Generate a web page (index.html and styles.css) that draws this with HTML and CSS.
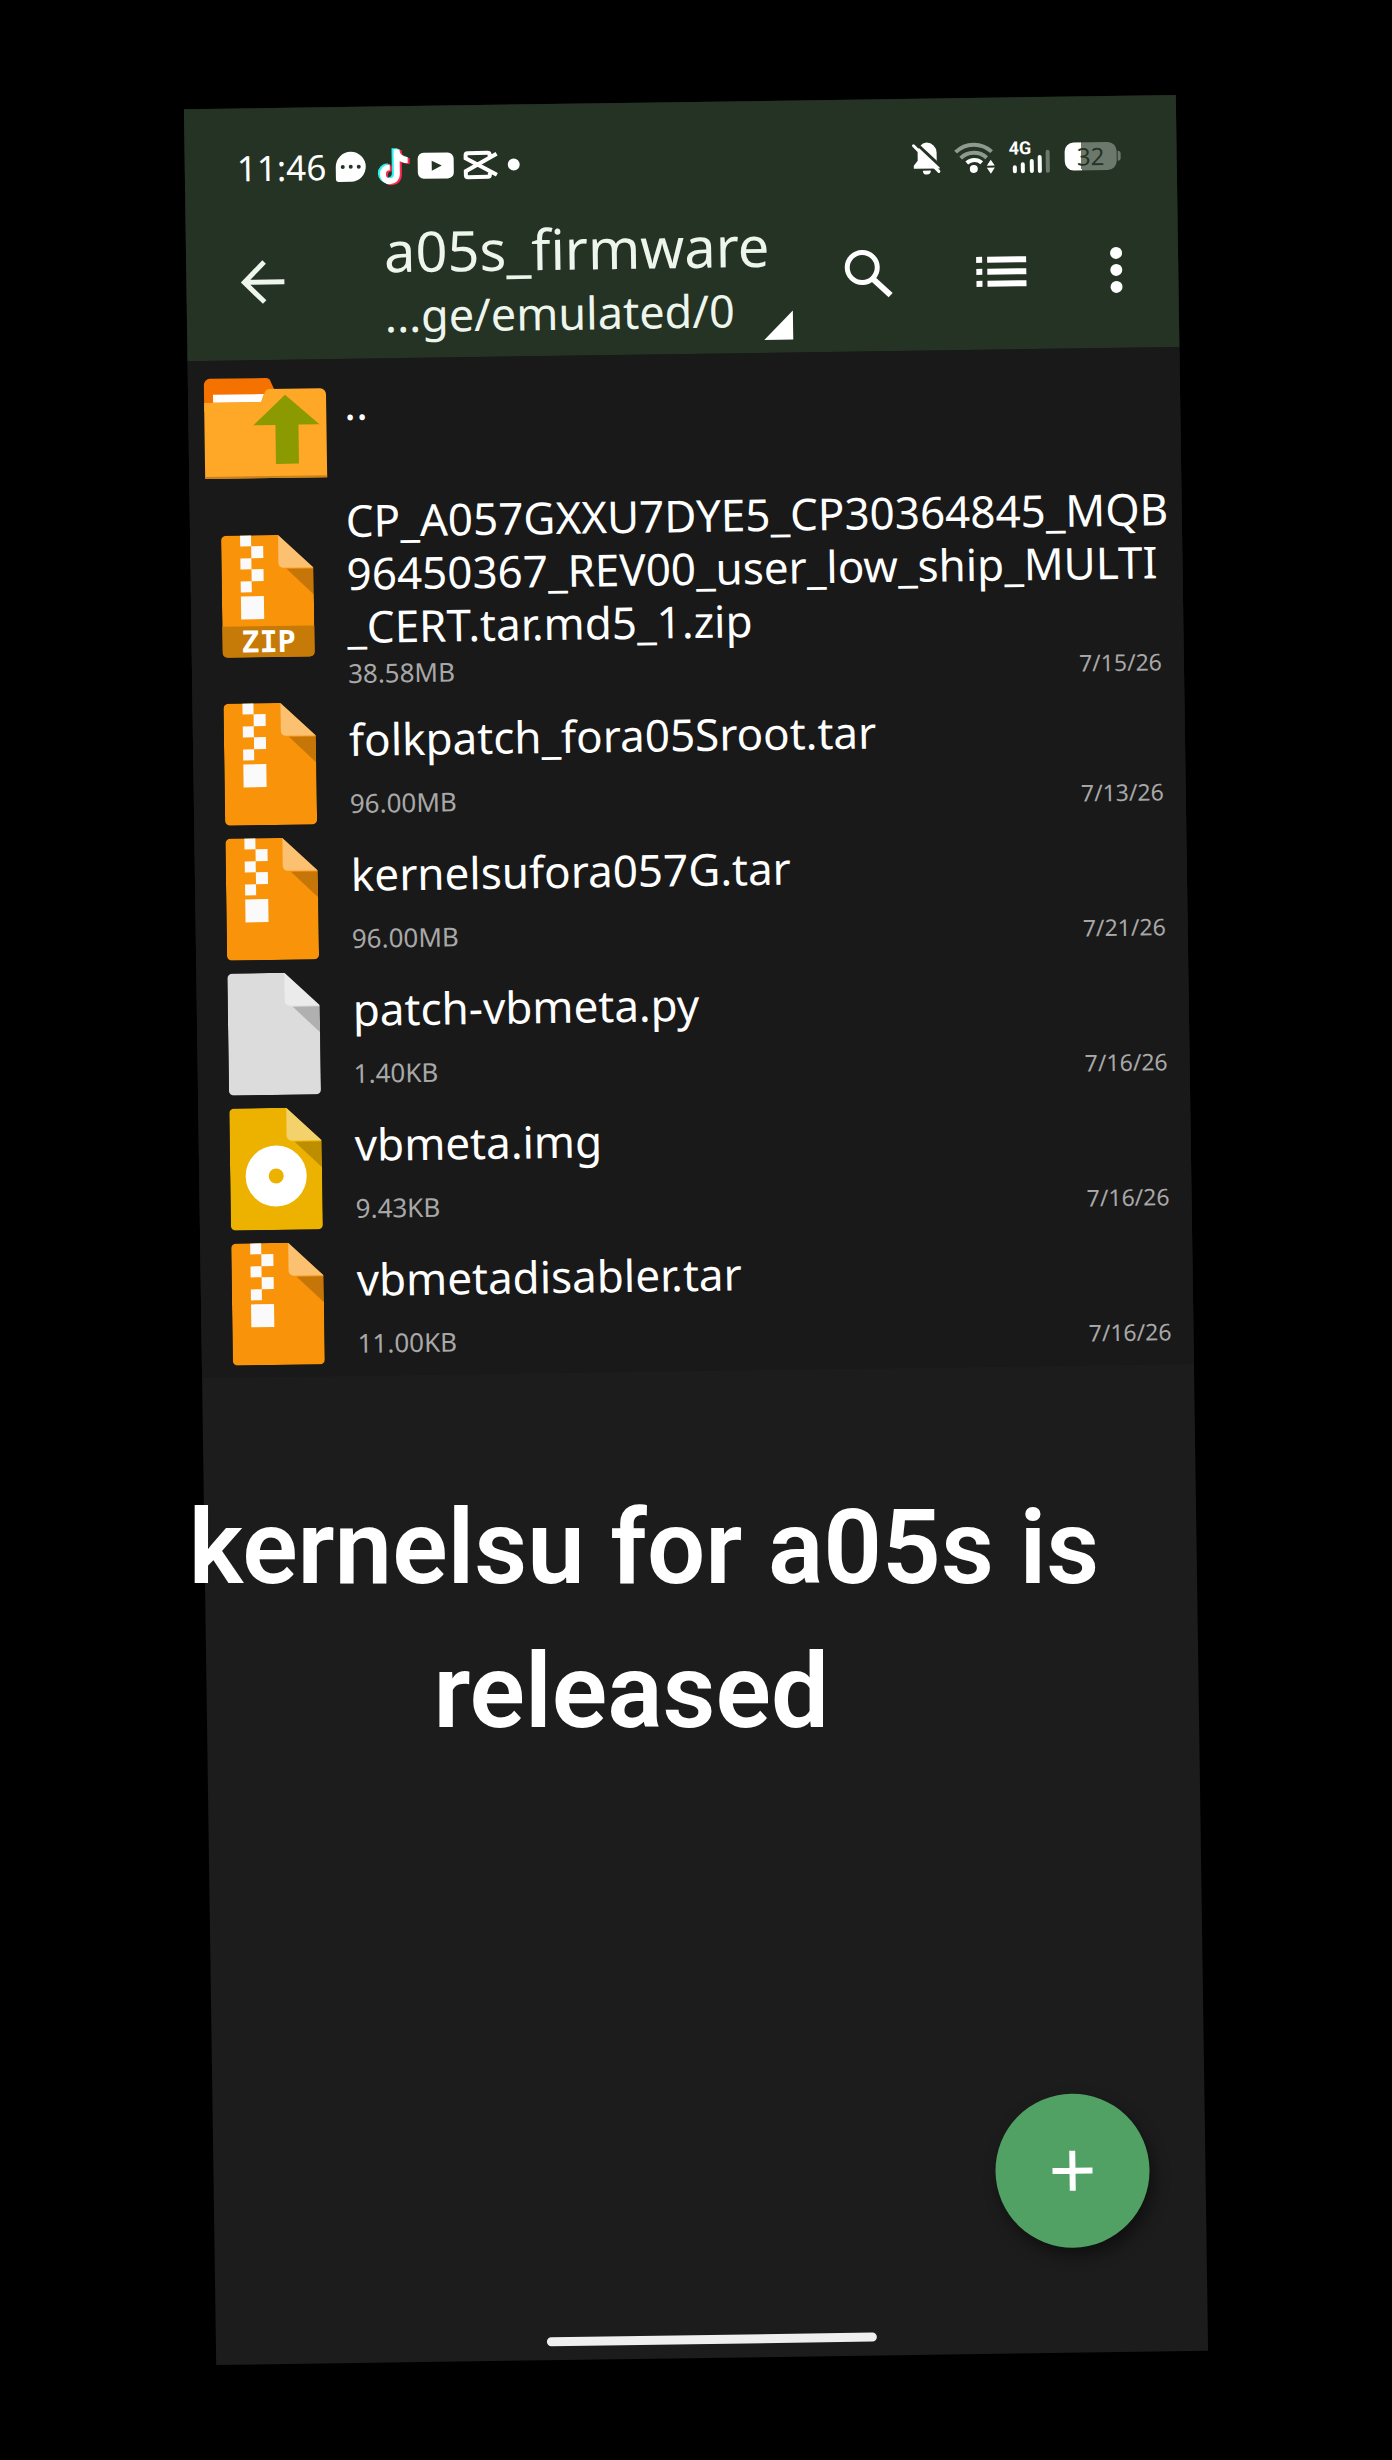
FILE: index.html
```html
<!DOCTYPE html>
<html lang="en">
<head>
  <meta charset="UTF-8" />
  <meta name="viewport" content="width=device-width, initial-scale=1.0"/>
  <title>a05s_firmware</title>
  <link rel="stylesheet" href="styles.css">
</head>
<body>
  <!-- shared icon shapes -->
  <svg class="sprite" aria-hidden="true">
    <symbol id="fold" viewBox="0 0 92 122">
      <path d="M5 0H57L92 33V117a5 5 0 0 1-5 5H5a5 5 0 0 1-5-5V5a5 5 0 0 1 5-5z" fill="currentColor"/>
      <path d="M57 0L92 33H62a5 5 0 0 1-5-5z" fill="#fff" fill-opacity=".42"/>
      <path d="M65 34H92V60z" fill="#000" fill-opacity=".2"/>
    </symbol>
    <symbol id="archive" viewBox="0 0 92 122">
      <use href="#fold"/>
      <path d="M19 0h11v11h12v12H30v11h12v12H30v11H19V46h11V34H19V23h11V11H19zM19 61h23v23H19z" fill="#fafafa"/>
    </symbol>
  </svg>

  <main class="stage">
    <div class="phone">
      <header class="top">
        <div class="status-bar">
          <div class="status-left">
            <span class="clock">11:46</span>
            <svg width="30" height="30" viewBox="0 0 30 30">
              <path d="M15 0a15 15 0 0 1 0 30H3a3 3 0 0 1-3-3V15A15 15 0 0 1 15 0z" fill="#fff"/>
              <g fill="#243323"><circle cx="7" cy="15" r="2"/><circle cx="15" cy="15" r="2"/><circle cx="23" cy="15" r="2"/></g>
            </svg>
            <svg width="32" height="36" viewBox="-3 0 32 36">
              <g fill="none" stroke-width="6">
                <path d="M16 0V25a7 7 0 1 1-7-7M16 1c0 6 5 10 11 10" stroke="#25f4ee"/>
                <path d="M20 2V27a7 7 0 1 1-7-7M20 3c0 6 5 10 11 10" stroke="#fe2c55"/>
                <path d="M18 1V26a7 7 0 1 1-7-7M18 2c0 6 5 10 11 10" stroke="#fff"/>
              </g>
            </svg>
            <svg width="36" height="26" viewBox="0 0 36 26">
              <rect width="36" height="26" rx="6" fill="#fff"/>
              <path d="M14 8l10 5-10 5z" fill="#243323"/>
            </svg>
            <svg width="34" height="28" viewBox="0 0 34 28">
              <path d="M26 6V4a2 2 0 0 0-2-2H4a2 2 0 0 0-2 2v3l31 17M33 3L2 20v4a2 2 0 0 0 2 2h20a2 2 0 0 0 2-2v-2" fill="none" stroke="#fff" stroke-width="4"/>
            </svg>
            <svg width="12" height="12" viewBox="0 0 12 12"><circle cx="6" cy="6" r="6" fill="#fff"/></svg>
          </div>
          <div class="status-right">
            <svg width="28" height="34" viewBox="0 0 28 34">
              <path d="M14 1a10 10 0 0 1 10 10v8l3 5v3H1v-3l4-5v-8A10 10 0 0 1 14 1zM10 29h8a4 4 0 0 1-8 0z" fill="#fff"/>
              <path d="M3 1L30 27" stroke="#243323" stroke-width="3"/>
              <path d="M1 4L26 30" stroke="#fff" stroke-width="3" stroke-linecap="round"/>
            </svg>
            <svg width="40" height="32" viewBox="0 0 40 32">
              <g fill="none" stroke-width="4">
                <path d="M1 10a26 26 0 0 1 36 0" stroke="#8f9a8f"/>
                <path d="M6 16a19 19 0 0 1 26 0" stroke="#8f9a8f"/>
                <path d="M12 21a11 11 0 0 1 15 0" stroke="#fff"/>
              </g>
              <circle cx="19" cy="27" r="4" fill="#fff"/>
              <path d="M32 24l4-6 4 6zM32 26h8l-4 6z" fill="#fff"/>
            </svg>
            <span class="signal">
              <span class="network">4G</span>
              <svg width="38" height="24" viewBox="0 0 38 24">
                <g stroke="#fff" stroke-width="4" stroke-linecap="round">
                  <path d="M2 18v4M10 15v7M19 12v10M27 8v14"/>
                  <path d="M35 3v19" stroke="#6d786d"/>
                </g>
              </svg>
            </span>
            <span class="battery"><span class="level">32</span></span>
          </div>
        </div>

        <nav class="app-bar">
          <button class="icon-btn back" aria-label="Back">
            <svg width="44" height="44" viewBox="0 0 44 44"><path d="M44 22H4M24 2L4 22l20 20" fill="none" stroke="#eef5ec" stroke-width="5"/></svg>
          </button>
          <button class="path">
            <span class="folder-name">a05s_firmware</span>
            <span class="folder-path">...ge/emulated/0</span>
          </button>
          <div class="actions">
            <button class="icon-btn" aria-label="Search">
              <svg width="48" height="48" viewBox="0 0 48 48"><circle cx="18" cy="18" r="15" fill="none" stroke="#fff" stroke-width="5"/><path d="M29 30L46 46" stroke="#fff" stroke-width="6"/></svg>
            </button>
            <button class="icon-btn" aria-label="View">
              <svg width="50" height="30" viewBox="0 0 50 30"><path d="M0 3h6M11 3h39M0 15h6M11 15h39M0 27h6M11 27h39" stroke="#fff" stroke-width="6"/></svg>
            </button>
            <button class="icon-btn" aria-label="More">
              <svg width="12" height="46" viewBox="0 0 12 46"><g fill="#fff"><circle cx="6" cy="6" r="6"/><circle cx="6" cy="23" r="6"/><circle cx="6" cy="40" r="6"/></g></svg>
            </button>
          </div>
        </nav>
      </header>

      <ul class="files">
        <li>
          <a class="row" href="#">
            <svg class="icon" width="122" height="100" viewBox="0 0 122 100">
              <path d="M6 0H62q4 0 5 4l4 9v20H0V6a6 6 0 0 1 6-6z" fill="#f57200"/>
              <path d="M9 16H60l-3 8H9z" fill="#fff"/>
              <path d="M0 24H57l4-10q1-3 5-3H116a6 6 0 0 1 6 6V100H0z" fill="#ffa726"/>
              <path d="M0 98H122v2H0z" fill="#c8821c"/>
              <path d="M81 17L115 47H94V86H71V47H49z" fill="#8a9a00"/>
            </svg>
            <span class="info"><span class="name">..</span></span>
          </a>
        </li>
        <li>
          <a class="row" href="#">
            <svg class="icon archive" width="92" height="122" viewBox="0 0 92 122">
              <use href="#archive"/>
              <path d="M0 91H92V117a5 5 0 0 1-5 5H5a5 5 0 0 1-5-5z" fill="#c67b08"/>
              <text class="ext" x="46" y="117">ZIP</text>
            </svg>
            <span class="info">
              <span class="name">CP_A057GXXU7DYE5_CP30364845_MQB<br>96450367_REV00_user_low_ship_MULTI<br>_CERT.tar.md5_1.zip</span>
              <span class="meta"><span>38.58MB</span><time>7/15/26</time></span>
            </span>
          </a>
        </li>
        <li>
          <a class="row" href="#">
            <svg class="icon archive" width="92" height="122"><use href="#archive"/></svg>
            <span class="info">
              <span class="name">folkpatch_fora05Sroot.tar</span>
              <span class="meta"><span>96.00MB</span><time>7/13/26</time></span>
            </span>
          </a>
        </li>
        <li>
          <a class="row" href="#">
            <svg class="icon archive" width="92" height="122"><use href="#archive"/></svg>
            <span class="info">
              <span class="name">kernelsufora057G.tar</span>
              <span class="meta"><span>96.00MB</span><time>7/21/26</time></span>
            </span>
          </a>
        </li>
        <li>
          <a class="row" href="#">
            <svg class="icon plain" width="92" height="122"><use href="#fold"/></svg>
            <span class="info">
              <span class="name">patch-vbmeta.py</span>
              <span class="meta"><span>1.40KB</span><time>7/16/26</time></span>
            </span>
          </a>
        </li>
        <li>
          <a class="row" href="#">
            <svg class="icon disc" width="92" height="122" viewBox="0 0 92 122">
              <use href="#fold"/>
              <circle cx="46" cy="68" r="19" fill="none" stroke="#fff" stroke-width="23"/>
            </svg>
            <span class="info">
              <span class="name">vbmeta.img</span>
              <span class="meta"><span>9.43KB</span><time>7/16/26</time></span>
            </span>
          </a>
        </li>
        <li>
          <a class="row" href="#">
            <svg class="icon archive" width="92" height="122"><use href="#archive"/></svg>
            <span class="info">
              <span class="name">vbmetadisabler.tar</span>
              <span class="meta"><span>11.00KB</span><time>7/16/26</time></span>
            </span>
          </a>
        </li>
      </ul>

      <button class="fab" aria-label="Add">
        <svg width="40" height="40" viewBox="0 0 40 40"><path d="M20 0v40M0 20h40" stroke="#fff" stroke-width="6"/></svg>
      </button>
      <div class="home-bar"></div>
    </div>

    <p class="caption">kernelsu for a05s is<br>released&nbsp;</p>
  </main>
</body>
</html>
```
FILE: styles.css
```css
* {
  box-sizing: border-box;
}
body {
  margin: 0;
  background-color: #000;
  color: #fff;
  font-family: "Noto Sans", sans-serif;
}
button {
  padding: 0;
  border: none;
  background: none;
  color: inherit;
  font: inherit;
  cursor: pointer;
}
svg {
  display: block;
  flex-shrink: 0;
  overflow: visible;
}
.sprite {
  position: absolute;
  width: 0;
  height: 0;
}
.stage {
  position: relative;
  display: flex;
  min-height: 100vh;
  padding: 102px 200px;
  overflow: hidden;
}
.phone {
  position: relative;
  flex: 1;
  display: flex;
  flex-direction: column;
  background-color: #1c1c1c;
  transform: rotate(-0.82deg);
}

/* header */
.top {
  background-color: #243323;
}
.status-bar {
  display: flex;
  justify-content: space-between;
  height: 96px;
  padding: 24px 56px 0 52px;
}
.status-left,
.status-right {
  display: flex;
  align-items: center;
  gap: 10px;
}
.status-right {
  gap: 14px;
}
.clock {
  font-size: 35px;
  line-height: 40px;
}
.signal {
  position: relative;
  display: flex;
  align-items: flex-end;
  width: 42px;
  height: 32px;
  padding-left: 4px;
}
.network {
  position: absolute;
  top: 0;
  left: 0;
  font: 700 18px/14px Roboto, sans-serif;
}
.battery {
  position: relative;
  width: 52px;
  height: 28px;
  margin-right: 4px;
  border-radius: 9px;
  background: linear-gradient(to right, #fff 32%, #6d786d 32%);
  color: #243323;
  font-size: 24px;
  line-height: 28px;
  text-align: center;
}
.battery::after {
  content: "";
  position: absolute;
  top: 9px;
  right: -4px;
  width: 3px;
  height: 10px;
  border-radius: 0 3px 3px 0;
  background-color: #6d786d;
}
.app-bar {
  display: flex;
  align-items: center;
  height: 156px;
  padding: 0 56px 0 54px;
}
.path {
  position: relative;
  flex: 1;
  margin: 0 52px 0 100px;
  color: #eef5ec;
  text-align: left;
}
.path::after {
  content: "";
  position: absolute;
  right: 0;
  bottom: 0;
  border-bottom: 29px solid #fff;
  border-left: 29px solid transparent;
}
.folder-name,
.folder-path {
  display: block;
}
.folder-name {
  font-size: 56px;
  line-height: 70px;
}
.folder-path {
  font-size: 45px;
  line-height: 60px;
}
.actions {
  display: flex;
  align-items: center;
  gap: 84px;
}

/* file list */
.files {
  margin: 0;
  padding: 0 0 6px;
  list-style: none;
  background-color: #191919;
}
.row {
  display: grid;
  grid-template-columns: 122px 1fr;
  column-gap: 18px;
  min-height: 135px;
  padding-left: 16px;
  color: inherit;
  text-decoration: none;
}
.icon {
  align-self: center;
  justify-self: center;
}
.archive {
  color: #f8930a;
}
.plain {
  color: #dcdcdc;
}
.disc {
  color: #edb200;
}
.ext {
  fill: #fff;
  font: 700 30px "DejaVu Sans Mono", monospace;
  text-anchor: middle;
}
.info {
  padding-bottom: 2px;
}
.name {
  display: flow-root;
  min-height: 88px;
  align-content: center;
  font-size: 44px;
  line-height: 53px;
  white-space: nowrap;
}
.meta {
  display: flex;
  justify-content: space-between;
  padding-right: 22px;
  color: #a8a8a8;
  font-size: 26px;
  line-height: 40px;
}
.meta time {
  font-size: 23px;
}

.fab {
  position: absolute;
  right: 56px;
  bottom: 105px;
  display: flex;
  align-items: center;
  justify-content: center;
  width: 154px;
  height: 154px;
  border-radius: 50%;
  background-color: #50a163;
  box-shadow: 4px 8px 16px rgba(0,0,0,0.45);
}
.home-bar {
  align-self: center;
  width: 330px;
  height: 9px;
  margin: auto 0 14px;
  border-radius: 5px;
  background-color: #efefef;
}

/* text over the screen recording */
.caption {
  position: absolute;
  top: 60%;
  left: 0;
  width: 100%;
  margin: 0;
  padding-right: 104px;
  font: 600 103px/144px Roboto, sans-serif;
  text-align: center;
  white-space: nowrap;
}
```
